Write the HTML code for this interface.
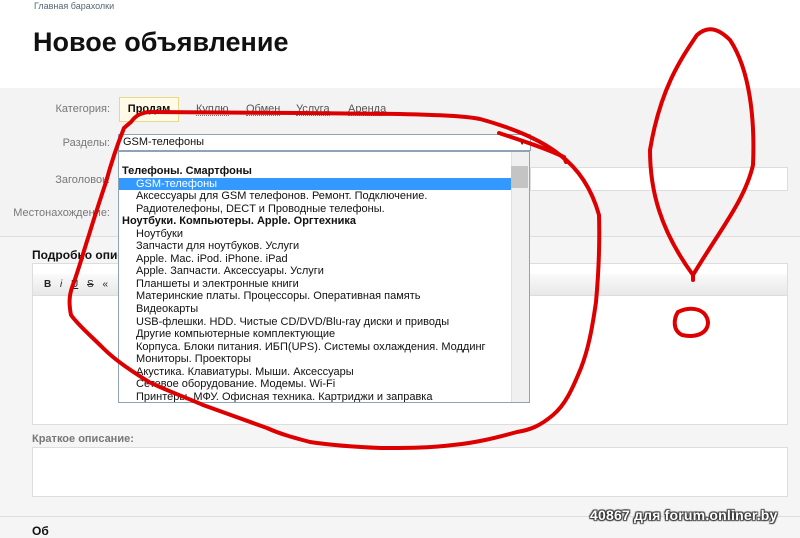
<!DOCTYPE html>
<html><head><meta charset="utf-8"><style>
*{margin:0;padding:0;box-sizing:border-box}
body{width:800px;height:532px;overflow:hidden;background:#f5f5f5;font-family:"Liberation Sans","Noto Sans CJK JP",sans-serif;position:relative}
.abs{position:absolute}
.lbl{position:absolute;font-size:11px;color:#777;text-align:right;width:110px}
.tab{position:absolute;top:104px;font-size:11px;color:#555;border-bottom:1px dotted #777;line-height:11px}
.list{position:absolute;left:118px;top:151px;width:412px;height:252px;background:#fff;border:1px solid #8fa3b8;font-size:11px;color:#111;overflow:hidden}
.list div{height:12.55px;line-height:12.55px;padding-left:17px;white-space:nowrap}
.list .g{font-weight:bold;padding-left:3px}
.list .s{background:#3399ff;color:#fff;margin-right:14px}
</style></head><body>
<div class="abs" style="left:0;top:0;width:800px;height:88px;background:#fff"></div>
<div class="abs" style="left:34px;top:1px;font-size:9px;color:#556677">Главная барахолки</div>
<div class="abs" style="left:33px;top:27px;font-size:27px;font-weight:bold;color:#111">Новое объявление</div>
<div class="abs" style="left:0;top:88px;width:800px;height:149px;background:#f3f3f3;border-bottom:1px solid #ddd"></div>
<div class="lbl" style="left:0;top:103px">Категория:</div>
<div class="abs" style="left:119px;top:97px;width:60px;height:25px;background:#fffbe6;border:1px solid #e8d98a;font-size:11px;font-weight:bold;color:#111;text-align:center;line-height:23px">Продам</div>
<div class="tab" style="left:196px">Куплю</div>
<div class="tab" style="left:246px">Обмен</div>
<div class="tab" style="left:296px">Услуга</div>
<div class="tab" style="left:348px">Аренда</div>
<div class="lbl" style="left:0;top:137px">Разделы:</div>
<div class="abs" style="left:118px;top:134px;width:413px;height:17px;background:#fff;border:1px solid #8fa3b8;font-size:11px;line-height:15px;padding-left:4px;color:#111">GSM-телефоны<span style="position:absolute;right:4px;font-size:8px">▼</span></div>
<div class="lbl" style="left:0;top:174px">Заголовок:</div>
<div class="abs" style="left:530px;top:167px;width:258px;height:24px;background:#fff;border:1px solid #ddd"></div>
<div class="lbl" style="left:0;top:207px">Местонахождение:</div>
<div class="abs" style="left:32px;top:248px;font-size:12px;font-weight:bold;color:#111">Подробно описание:</div>
<div class="abs" style="left:32px;top:263px;width:756px;height:162px;background:#fff;border:1px solid #ddd"></div>
<div class="abs" style="left:33px;top:274px;width:754px;height:22px;background:linear-gradient(#fafafa,#e8e8e8);border-bottom:1px solid #ddd;font-size:10px;color:#222;line-height:22px;padding-left:11px;word-spacing:6px"><b>B</b> <i>i</i> <u>U</u> <s>S</s> «</div>
<div class="abs" style="left:32px;top:433px;font-size:11px;font-weight:bold;color:#777">Краткое описание:</div>
<div class="abs" style="left:32px;top:447px;width:756px;height:50px;background:#fff;border:1px solid #ddd"></div>
<div class="abs" style="left:0;top:516px;width:800px;height:1px;background:#ddd"></div>
<div class="abs" style="left:32px;top:524px;font-size:12px;font-weight:bold;color:#111">Об</div>
<div class="list">
<div style="height:13px"></div>
<div class="g">Телефоны. Смартфоны</div>
<div class="s">GSM-телефоны</div>
<div>Аксессуары для GSM телефонов. Ремонт. Подключение.</div>
<div>Радиотелефоны, DECT и Проводные телефоны.</div>
<div class="g">Ноутбуки. Компьютеры. Apple. Оргтехника</div>
<div>Ноутбуки</div>
<div>Запчасти для ноутбуков. Услуги</div>
<div>Apple. Mac. iPod. iPhone. iPad</div>
<div>Apple. Запчасти. Аксессуары. Услуги</div>
<div>Планшеты и электронные книги</div>
<div>Материнские платы. Процессоры. Оперативная память</div>
<div>Видеокарты</div>
<div>USB-флешки. HDD. Чистые CD/DVD/Blu-ray диски и приводы</div>
<div>Другие компьютерные комплектующие</div>
<div>Корпуса. Блоки питания. ИБП(UPS). Системы охлаждения. Моддинг</div>
<div>Мониторы. Проекторы</div>
<div>Акустика. Клавиатуры. Мыши. Аксессуары</div>
<div>Сетевое оборудование. Модемы. Wi-Fi</div>
<div>Принтеры. МФУ. Офисная техника. Картриджи и заправка</div>
<div class="abs" style="right:0;top:0;width:13px;height:250px;background:#f0f0f0;border-left:1px solid #e0e0e0"></div>
<div class="abs" style="right:1px;top:14px;width:10px;height:22px;background:#c4c4c4"></div>
</div>
<svg class="abs" style="left:0;top:0" width="800" height="532" viewBox="0 0 800 532">
<g fill="none" stroke="#dd0000" stroke-width="4" stroke-linecap="round" stroke-linejoin="round">
<path d="M131 122 C136 115 142 112 152 112 L300 113 L400 114 C440 115 465 116 480 119 C520 130 545 143 560 155 C580 170 592 190 599 215 C600 250 598 280 596 302 C592 330 588 350 581 368 C572 390 565 405 553 415 C540 426 530 430 517 432 C495 438 475 443 453 445 C430 448 405 448 381 448 C355 447 330 445 310 442 C295 438 280 434 267 428 C245 420 225 413 203 405 C185 397 165 390 149 382 C130 370 115 360 103 348 C90 335 78 325 71 315 C68 300 70 292 74 282 C80 265 84 250 89 235 C95 215 100 200 106 182 C112 160 118 143 124 128 Z"/>
<path d="M499 133 C520 140 545 148 564 157 L566 162"/>
<path d="M697 35 C680 60 660 90 650 150 C650 190 660 230 693 275 C720 230 745 200 753 165 C755 120 750 70 730 40 C715 25 705 28 697 35 Z"/>
<path d="M693 275 L693 280"/>
<path d="M678 312 C690 306 706 308 708 322 C708 334 695 338 682 335 C672 330 674 318 678 312 Z"/>
</g>
</svg>
<div class="abs" style="left:590px;top:507px;font-size:14px;font-weight:bold;color:#fff;text-shadow:1px 1px 1px #333,-1px -1px 1px #333,1px -1px 1px #333,-1px 1px 1px #333;letter-spacing:0.2px">40867 для forum.onliner.by</div>
</body></html>
